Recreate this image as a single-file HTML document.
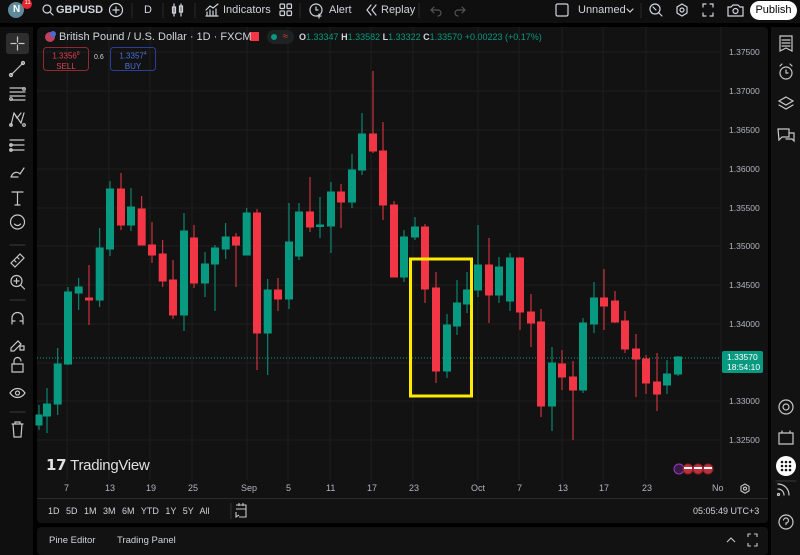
<!DOCTYPE html>
<html><head><meta charset="utf-8"><style>
*{margin:0;padding:0;box-sizing:border-box}
body{width:800px;height:555px;background:#000;overflow:hidden;position:relative;font-family:"Liberation Sans",sans-serif;color:#d1d4dc}
.a{position:absolute;white-space:nowrap}
.tb{font-size:11px;color:#d1d4dc;top:4px}
.ax{font-size:9px;color:#b2b5be}
.pr{font-size:8.5px;color:#b2b5be;left:729px}
</style></head><body>
<div class="a" style="left:0;top:0;width:800px;height:23px;background:#0f0f0f"></div>
<div class="a" style="left:0;top:27px;width:33px;height:528px;background:#0f0f0f"></div>
<div class="a" style="left:37px;top:27px;width:731px;height:471px;background:#121212;border-radius:4px 4px 0 0"></div>
<div class="a" style="left:37px;top:499px;width:731px;height:24px;background:#121212;border-radius:0 0 4px 4px"></div>
<div class="a" style="left:37px;top:527px;width:731px;height:28px;background:#121212;border-radius:4px"></div>
<div class="a" style="left:771px;top:27px;width:29px;height:528px;background:#121212"></div>

<svg class="a" style="left:0;top:0" width="800" height="555" viewBox="0 0 800 555">
<g stroke="#1e1e1e" stroke-width="1">
<line x1="37" y1="52" x2="721" y2="52"/><line x1="37" y1="91" x2="721" y2="91"/><line x1="37" y1="130" x2="721" y2="130"/><line x1="37" y1="169" x2="721" y2="169"/><line x1="37" y1="208" x2="721" y2="208"/><line x1="37" y1="246" x2="721" y2="246"/><line x1="37" y1="285" x2="721" y2="285"/><line x1="37" y1="324" x2="721" y2="324"/><line x1="37" y1="363" x2="721" y2="363"/><line x1="37" y1="401" x2="721" y2="401"/><line x1="37" y1="440" x2="721" y2="440"/>
<line x1="67" y1="27" x2="67" y2="480"/><line x1="109" y1="27" x2="109" y2="480"/><line x1="150" y1="27" x2="150" y2="480"/><line x1="192" y1="27" x2="192" y2="480"/><line x1="247" y1="27" x2="247" y2="480"/><line x1="288" y1="27" x2="288" y2="480"/><line x1="330" y1="27" x2="330" y2="480"/><line x1="371" y1="27" x2="371" y2="480"/><line x1="413" y1="27" x2="413" y2="480"/><line x1="478" y1="27" x2="478" y2="480"/><line x1="519" y1="27" x2="519" y2="480"/><line x1="562" y1="27" x2="562" y2="480"/><line x1="603" y1="27" x2="603" y2="480"/><line x1="646" y1="27" x2="646" y2="480"/>
<line x1="721" y1="27" x2="721" y2="480"/>
</g>
<line x1="37" y1="498.5" x2="768" y2="498.5" stroke="#2a2a2a"/>
<line x1="37" y1="358" x2="721" y2="358" stroke="#089981" stroke-dasharray="1 2" stroke-width="1"/>
<g stroke-width="1">
<g fill="#089981" stroke="#089981">
<line x1="39" y1="405" x2="39" y2="430"/><rect x="36" y="415" width="6" height="10"/>
<line x1="47" y1="388" x2="47" y2="433"/><rect x="43.5" y="404" width="7" height="12"/>
<line x1="57.7" y1="348" x2="57.7" y2="415"/><rect x="54.2" y="364" width="7" height="40"/>
<line x1="68" y1="287" x2="68" y2="365"/><rect x="64.5" y="292" width="7" height="72"/>
<line x1="78.7" y1="278" x2="78.7" y2="310"/><rect x="75.2" y="287" width="7" height="6"/>
<line x1="99.7" y1="228" x2="99.7" y2="307"/><rect x="96.2" y="248" width="7" height="52"/>
<line x1="110" y1="181" x2="110" y2="256"/><rect x="106.5" y="189" width="7" height="60"/>
<line x1="131" y1="188" x2="131" y2="231"/><rect x="127.5" y="207" width="7" height="18"/>
<line x1="184" y1="213" x2="184" y2="331"/><rect x="180.5" y="231" width="7" height="84"/>
<line x1="205" y1="252" x2="205" y2="297"/><rect x="201.5" y="264" width="7" height="19"/>
<line x1="215" y1="245" x2="215" y2="311"/><rect x="211.5" y="248" width="7" height="16"/>
<line x1="225.7" y1="223" x2="225.7" y2="259"/><rect x="222.2" y="237" width="7" height="12"/>
<line x1="246.7" y1="208" x2="246.7" y2="255"/><rect x="243.2" y="213" width="7" height="42"/>
<line x1="267.7" y1="279" x2="267.7" y2="375"/><rect x="264.2" y="290" width="7" height="43"/>
<line x1="289" y1="203" x2="289" y2="309"/><rect x="285.5" y="242" width="7" height="57"/>
<line x1="299" y1="203" x2="299" y2="260"/><rect x="295.5" y="212" width="7" height="44"/>
<line x1="320" y1="197" x2="320" y2="238"/><rect x="316.5" y="225" width="7" height="1.5"/>
<line x1="331" y1="182" x2="331" y2="253"/><rect x="327.5" y="192" width="7" height="34"/>
<line x1="352" y1="154" x2="352" y2="208"/><rect x="348.5" y="170" width="7" height="32"/>
<line x1="362" y1="113" x2="362" y2="175"/><rect x="358.5" y="134" width="7" height="36"/>
<line x1="404" y1="230" x2="404" y2="282"/><rect x="400.5" y="237" width="7" height="40"/>
<line x1="415" y1="217" x2="415" y2="240"/><rect x="411.5" y="227" width="7" height="10"/>
<line x1="447" y1="314" x2="447" y2="378"/><rect x="443.5" y="325" width="7" height="46"/>
<line x1="457" y1="280" x2="457" y2="335"/><rect x="453.5" y="303" width="7" height="23"/>
<line x1="467" y1="272" x2="467" y2="313"/><rect x="463.5" y="290" width="7" height="14"/>
<line x1="478" y1="225" x2="478" y2="297"/><rect x="474.5" y="265" width="7" height="25"/>
<line x1="499" y1="257" x2="499" y2="303"/><rect x="495.5" y="267" width="7" height="28"/>
<line x1="510" y1="253" x2="510" y2="311"/><rect x="506.5" y="258" width="7" height="43"/>
<line x1="552" y1="347" x2="552" y2="431"/><rect x="548.5" y="363" width="7" height="43"/>
<line x1="583" y1="318" x2="583" y2="393"/><rect x="579.5" y="323" width="7" height="67"/>
<line x1="594" y1="282" x2="594" y2="333"/><rect x="590.5" y="298" width="7" height="26"/>
<line x1="667" y1="360" x2="667" y2="394"/><rect x="663.5" y="374" width="7" height="11"/>
<line x1="678" y1="356" x2="678" y2="376"/><rect x="674.5" y="357" width="7" height="17"/>
</g>
<g fill="#f23645" stroke="#f23645">
<line x1="89" y1="265" x2="89" y2="325"/><rect x="85.5" y="298" width="7" height="2"/>
<line x1="121" y1="173" x2="121" y2="230"/><rect x="117.5" y="189" width="7" height="36"/>
<line x1="141.7" y1="196" x2="141.7" y2="245"/><rect x="138.2" y="209" width="7" height="36"/>
<line x1="152" y1="222" x2="152" y2="263"/><rect x="148.5" y="245" width="7" height="10"/>
<line x1="162.7" y1="240" x2="162.7" y2="287"/><rect x="159.2" y="254" width="7" height="27"/>
<line x1="173" y1="260" x2="173" y2="319"/><rect x="169.5" y="280" width="7" height="35"/>
<line x1="194" y1="225" x2="194" y2="288"/><rect x="190.5" y="238" width="7" height="45"/>
<line x1="236" y1="233" x2="236" y2="287"/><rect x="232.5" y="237" width="7" height="8"/>
<line x1="257" y1="209" x2="257" y2="370"/><rect x="253.5" y="213" width="7" height="120"/>
<line x1="278" y1="278" x2="278" y2="311"/><rect x="274.5" y="290" width="7" height="9"/>
<line x1="310" y1="177" x2="310" y2="232"/><rect x="306.5" y="212" width="7" height="15"/>
<line x1="341" y1="184" x2="341" y2="228"/><rect x="337.5" y="192" width="7" height="10"/>
<line x1="373" y1="71" x2="373" y2="153"/><rect x="369.5" y="134" width="7" height="17"/>
<line x1="383" y1="122" x2="383" y2="220"/><rect x="379.5" y="151" width="7" height="54"/>
<line x1="394" y1="201" x2="394" y2="277"/><rect x="390.5" y="205" width="7" height="72"/>
<line x1="425" y1="224" x2="425" y2="303"/><rect x="421.5" y="227" width="7" height="62"/>
<line x1="436" y1="272" x2="436" y2="383"/><rect x="432.5" y="288" width="7" height="83"/>
<line x1="489" y1="238" x2="489" y2="323"/><rect x="485.5" y="265" width="7" height="30"/>
<line x1="520" y1="257" x2="520" y2="330"/><rect x="516.5" y="258" width="7" height="54"/>
<line x1="531" y1="294" x2="531" y2="347"/><rect x="527.5" y="312" width="7" height="11"/>
<line x1="541" y1="309" x2="541" y2="417"/><rect x="537.5" y="322" width="7" height="84"/>
<line x1="562" y1="350" x2="562" y2="390"/><rect x="558.5" y="364" width="7" height="13"/>
<line x1="573" y1="361" x2="573" y2="440"/><rect x="569.5" y="377" width="7" height="13"/>
<line x1="604" y1="269" x2="604" y2="330"/><rect x="600.5" y="298" width="7" height="8"/>
<line x1="615" y1="291" x2="615" y2="323"/><rect x="611.5" y="301" width="7" height="21"/>
<line x1="625" y1="311" x2="625" y2="353"/><rect x="621.5" y="321" width="7" height="28"/>
<line x1="636" y1="334" x2="636" y2="397"/><rect x="632.5" y="349" width="7" height="10"/>
<line x1="646" y1="355" x2="646" y2="394"/><rect x="642.5" y="359" width="7" height="24"/>
<line x1="657" y1="353" x2="657" y2="411"/><rect x="653.5" y="382" width="7" height="12"/>
</g>
</g>
<rect x="410.5" y="259" width="61" height="137" fill="none" stroke="#ffeb00" stroke-width="3"/>
<rect x="6" y="33" width="23" height="21" rx="3" fill="#2e2e2e"/>
<g stroke="#c8c8c8" stroke-width="1.2" fill="none" stroke-linecap="round">
<path d="M17.5 37v5M17.5 45v5M11 43.5h5M19 43.5h5"/>
<path d="M11 75L23 63"/><circle cx="11" cy="75" r="1.5"/><circle cx="23" cy="63" r="1.5"/>
<path d="M10 88h15M10 92h15M10 96h15M10 100h15"/><circle cx="24" cy="89" r="1.3"/><circle cx="11" cy="99" r="1.3"/>
<path d="M11 125L14 113L21 123L24 113M14 113L17 118L21 113"/><circle cx="11" cy="125" r="1.3"/><circle cx="24" cy="125" r="1.3"/>
<path d="M10 140h14M10 145h14M10 150h14"/><circle cx="11" cy="145" r="1.3"/><circle cx="11" cy="150" r="1.3"/>
<path d="M11 177c2-5 6-6 9-3l4-6M11 177h7"/>
<path d="M12 192h11M17.5 192v13M15 205h5"/>
<circle cx="17.5" cy="222" r="7"/><path d="M14.5 224c1.5 2 4.5 2 6 0"/>
<path d="M10 245h15" stroke="#333"/>
<path d="M11 263l9-9 4 4-9 9z M14 260l2 2M17 257l2 2"/>
<circle cx="16.5" cy="281" r="5.5"/><path d="M20.5 285l4 4M14 281h5M16.5 278.5v5"/>
<path d="M10 300h15" stroke="#333"/>
<path d="M12 324v-6a5.5 5.5 0 0 1 11 0v6M12 321h3M20 321h3"/>
<path d="M11 348l7-7 3 3-7 7h-3zM20 346h4v4h-4z"/>
<path d="M12 364h11v8h-11zM14 364v-3a3.5 3.5 0 0 1 7 0"/>
<path d="M10 393c4-6 11-6 15 0c-4 6-11 6-15 0z"/><circle cx="17.5" cy="393" r="2"/>
<path d="M10 412h15" stroke="#333"/>
<path d="M12 424h11M15 424v-2h5v2M13 424l1 13h7l1-13"/>
</g>
<g stroke="#c8c8c8" stroke-width="1.2" fill="none" stroke-linecap="round">
<path d="M780 36h12v15l-6-3-6 3zM782 40h8M782 43h8M782 46h8"/>
<circle cx="786" cy="73" r="6"/><path d="M786 70v3h2M780 66l2-2M792 66l-2-2"/>
<path d="M786 97l7 4-7 4-7-4zM779 105l7 4 7-4"/>
<path d="M778 129h11v8h-7l-3 3zM790 133h4v8l-2-2h-6"/>
<circle cx="786" cy="407" r="7"/><circle cx="786" cy="407" r="3"/>
<path d="M779 433h14v11h-14zM782 433v-2M790 433v-2"/>
<path d="M778 484a11 11 0 0 1 11 11M778 489a6 6 0 0 1 6 6"/><circle cx="778.5" cy="494.5" r="1"/>
<circle cx="786" cy="522" r="7"/><path d="M783.5 520a2.5 2.5 0 1 1 2.5 3v1.5"/>
<path d="M776 481h20" stroke="#333"/>
</g>
<circle cx="786" cy="466" r="10" fill="#fff"/>
<g fill="#121212"><circle cx="782" cy="462" r="1.3"/><circle cx="786" cy="462" r="1.3"/><circle cx="790" cy="462" r="1.3"/><circle cx="782" cy="466" r="1.3"/><circle cx="786" cy="466" r="1.3"/><circle cx="790" cy="466" r="1.3"/><circle cx="782" cy="470" r="1.3"/><circle cx="786" cy="470" r="1.3"/><circle cx="790" cy="470" r="1.3"/></g>
<circle cx="16" cy="10" r="8" fill="#5f8a9c"/>
<circle cx="27" cy="4" r="5" fill="#e5262f"/>
<g stroke="#d1d4dc" stroke-width="1.2" fill="none" stroke-linecap="round">
<circle cx="47" cy="9" r="4"/><path d="M50 12l3 3"/>
<circle cx="116" cy="10" r="6.5"/><path d="M116 7v6M113 10h6"/>
<path d="M174 4v12M181 4v12"/><rect x="172.5" y="7" width="3" height="6"/><rect x="179.5" y="6" width="3" height="6"/>
<path d="M206 16h12M207 15v-3M210 15v-5M213 15v-4M216 15v-6M206 10l4-4 3 2 5-4"/>
<rect x="280" y="4" width="4.5" height="4.5" rx="1"/><rect x="287" y="4" width="4.5" height="4.5" rx="1"/><rect x="280" y="11" width="4.5" height="4.5" rx="1"/><rect x="287" y="11" width="4.5" height="4.5" rx="1"/>
<circle cx="316" cy="10" r="6"/><path d="M316 7v3h2M319 14v4M317 16h4"/>
<path d="M371 5l-4 5 4 5M376 5l-4 5 4 5"/>
<path d="M431 10h7a3 3 0 0 1 0 6M431 10l3-3M431 10l3 3" stroke="#555"/>
<path d="M465 10h-7a3 3 0 0 0 0 6M465 10l-3-3M465 10l-3 3" stroke="#555"/>
<rect x="556" y="4" width="12" height="12" rx="1.5"/>
<path d="M627 9l3 3 3-3"/>
<circle cx="655" cy="9" r="5"/><path d="M659 13l3 3M653 7l3 3"/>
<path d="M682 4l5 3v6l-5 3-5-3v-6z"/><circle cx="682" cy="10" r="2"/>
<path d="M703 7v-3h3M710 4h3v3M713 13v3h-3M706 16h-3v-3"/>
<path d="M728 7h3l2-2h5l2 2h3v9h-15z"/><circle cx="735.5" cy="11" r="2.5"/>
</g>
<g stroke="#2a2a2a"><line x1="132" y1="3" x2="132" y2="18"/><line x1="163" y1="3" x2="163" y2="18"/><line x1="195" y1="3" x2="195" y2="18"/><line x1="300" y1="3" x2="300" y2="18"/><line x1="419" y1="3" x2="419" y2="18"/><line x1="641" y1="3" x2="641" y2="18"/></g>
<circle cx="50" cy="37" r="5" fill="#c04060"/><circle cx="53" cy="34" r="3" fill="#4a6ad0"/>
<rect x="250" y="32" width="9" height="9" fill="#f23645"/>
<rect x="267" y="30" width="27" height="14" rx="7" fill="#1e2222"/>
<circle cx="274" cy="37" r="3" fill="#089981"/>
<rect x="43.5" y="47.5" width="45" height="23" rx="3" fill="none" stroke="#8f2a33"/>
<rect x="110.5" y="47.5" width="45" height="23" rx="3" fill="none" stroke="#2b3f9a"/>
<rect x="722" y="351" width="41" height="22" rx="2" fill="#089981"/>
<g stroke="#c8c8c8" stroke-width="1.1" fill="none">
<path d="M745 484l4 2.3v4.6l-4 2.3-4-2.3v-4.6z"/><circle cx="745" cy="488.6" r="1.5"/>
<path d="M236 505h10v12h-7M236 509h10M239 503v3M243 503v3M236 512v5l3-2"/>
<path d="M727 542l4-4 4 4"/>
<path d="M751 534h-3v3M751 546h-3v-3M754 534h3v3M754 546h3v-3"/>
</g>
<line x1="231" y1="503" x2="231" y2="519" stroke="#333"/>
<circle cx="679" cy="469" r="5" fill="#3a1a4a" stroke="#9a3ac0"/>
<g fill="#c0303a" stroke="#8a1f28"><circle cx="688" cy="469" r="5"/><circle cx="698" cy="469" r="5"/><circle cx="708" cy="469" r="5"/></g>
<g fill="#fff"><rect x="684" y="467" width="8" height="2"/><rect x="694" y="467" width="8" height="2"/><rect x="704" y="467" width="8" height="2"/></g>
</svg>

<div class="a" style="left:13px;top:4px;font-size:10px;color:#fff;font-weight:bold">N</div>
<div class="a" style="left:24.5px;top:0px;font-size:6px;color:#fff">11</div>
<div class="a tb" style="left:56px;font-weight:bold">GBPUSD</div>
<div class="a tb" style="left:144px">D</div>
<div class="a tb" style="left:223px">Indicators</div>
<div class="a tb" style="left:329px">Alert</div>
<div class="a tb" style="left:381px">Replay</div>
<div class="a tb" style="left:578px">Unnamed</div>
<div class="a" style="left:750px;top:1px;width:47px;height:19px;background:#fff;border-radius:10px;color:#000;font-size:11px;text-align:center;line-height:19px">Publish</div>

<div class="a" style="left:59px;top:31px;font-size:11px;color:#d1d4dc">British Pound / U.S. Dollar · 1D · FXCM</div>
<div class="a" style="left:283px;top:31px;font-size:9px;color:#f23645">≈</div>
<div class="a" style="left:299px;top:32px;font-size:9px;color:#089981"><b style="color:#d1d4dc">O</b>1.33347 <b style="color:#d1d4dc">H</b>1.33582 <b style="color:#d1d4dc">L</b>1.33322 <b style="color:#d1d4dc">C</b>1.33570 +0.00223 (+0.17%)</div>
<div class="a" style="left:44px;top:49px;width:44px;text-align:center;font-size:8px;color:#e04050;line-height:10px">1.3356<sup style="font-size:5px">8</sup><br>SELL</div>
<div class="a" style="left:94px;top:54px;font-size:7px;color:#d1d4dc">0.6</div>
<div class="a" style="left:111px;top:49px;width:44px;text-align:center;font-size:8px;color:#4a70e0;line-height:10px">1.3357<sup style="font-size:5px">4</sup><br>BUY</div>

<div class="a pr" style="top:47px">1.37500</div>
<div class="a pr" style="top:86px">1.37000</div>
<div class="a pr" style="top:125px">1.36500</div>
<div class="a pr" style="top:164px">1.36000</div>
<div class="a pr" style="top:203px">1.35500</div>
<div class="a pr" style="top:241px">1.35000</div>
<div class="a pr" style="top:280px">1.34500</div>
<div class="a pr" style="top:319px">1.34000</div>
<div class="a pr" style="top:396px">1.33000</div>
<div class="a pr" style="top:435px">1.32500</div>
<div class="a" style="left:727px;top:352px;font-size:8.5px;color:#fff;line-height:10px">1.33570<br>18:54:10</div>

<div class="a" style="left:46px;top:456px;font-size:15px;font-weight:bold;color:#e0e0e0;letter-spacing:-0.3px">𝟭𝟳 <span style="font-weight:normal">TradingView</span></div>

<div class="a ax" style="left:64px;top:483px">7</div>
<div class="a ax" style="left:105px;top:483px">13</div>
<div class="a ax" style="left:146px;top:483px">19</div>
<div class="a ax" style="left:188px;top:483px">25</div>
<div class="a ax" style="left:241px;top:483px">Sep</div>
<div class="a ax" style="left:286px;top:483px">5</div>
<div class="a ax" style="left:326px;top:483px">11</div>
<div class="a ax" style="left:367px;top:483px">17</div>
<div class="a ax" style="left:409px;top:483px">23</div>
<div class="a ax" style="left:471px;top:483px">Oct</div>
<div class="a ax" style="left:517px;top:483px">7</div>
<div class="a ax" style="left:558px;top:483px">13</div>
<div class="a ax" style="left:599px;top:483px">17</div>
<div class="a ax" style="left:642px;top:483px">23</div>
<div class="a ax" style="left:712px;top:483px">No</div>

<div class="a" style="left:48px;top:506px;font-size:9px;color:#d1d4dc;word-spacing:4px">1D 5D 1M 3M 6M YTD 1Y 5Y All</div>
<div class="a" style="left:693px;top:506px;font-size:9px;color:#d1d4dc">05:05:49 UTC+3</div>
<div class="a" style="left:49px;top:535px;font-size:9.5px;color:#d1d4dc">Pine Editor</div>
<div class="a" style="left:117px;top:535px;font-size:9.5px;color:#d1d4dc">Trading Panel</div>
</body></html>
